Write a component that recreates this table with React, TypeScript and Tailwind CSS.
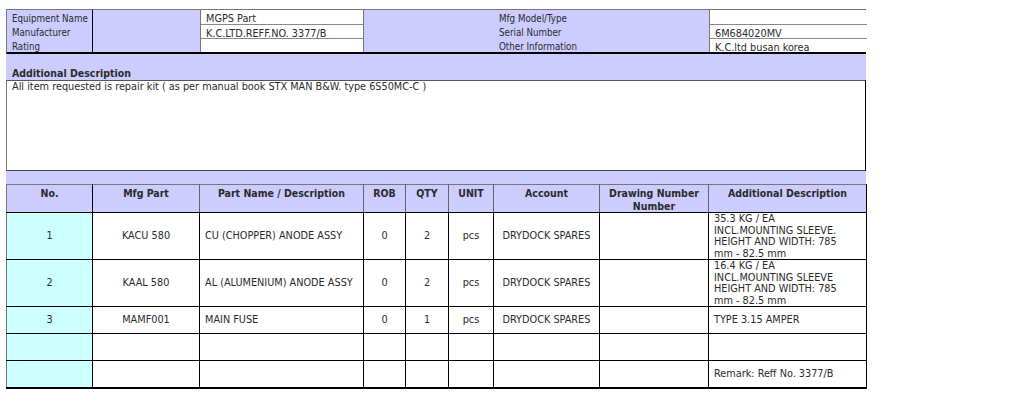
import React from 'react';

const font = "font-['DejaVu_Sans_Condensed','DejaVu_Sans',sans-serif]";

const infoLeft = ['Equipment Name', 'Manufacturer', 'Rating'];
const infoLeftValues = ['MGPS Part', 'K.C.LTD.REFF.NO. 3377/B', ''];
const infoRight = ['Mfg Model/Type', 'Serial Number', 'Other Information'];
const infoRightValues = ['', '6M684020MV', 'K.C.ltd busan korea'];

const rows = [
  {
    no: '1',
    part: 'KACU 580',
    name: 'CU (CHOPPER) ANODE ASSY',
    rob: '0',
    qty: '2',
    unit: 'pcs',
    account: 'DRYDOCK SPARES',
    desc: ['35.3 KG / EA', 'INCL.MOUNTING SLEEVE.', 'HEIGHT AND WIDTH: 785', 'mm - 82.5 mm'],
    h: 'h-[47px]',
  },
  {
    no: '2',
    part: 'KAAL 580',
    name: 'AL (ALUMENIUM) ANODE ASSY',
    rob: '0',
    qty: '2',
    unit: 'pcs',
    account: 'DRYDOCK SPARES',
    desc: ['16.4 KG / EA', 'INCL.MOUNTING SLEEVE', 'HEIGHT AND WIDTH: 785', 'mm - 82.5 mm'],
    h: 'h-[47px]',
  },
  {
    no: '3',
    part: 'MAMF001',
    name: 'MAIN FUSE',
    rob: '0',
    qty: '1',
    unit: 'pcs',
    account: 'DRYDOCK SPARES',
    desc: ['TYPE 3.15 AMPER'],
    h: 'h-[27px]',
  },
  { no: '', part: '', name: '', rob: '', qty: '', unit: '', account: '', desc: [], h: 'h-[27px]' },
  { no: '', part: '', name: '', rob: '', qty: '', unit: '', account: '', desc: ['Remark: Reff No. 3377/B'], h: 'h-[27px]' },
];

function ValueBox({ values }: { values: string[] }) {
  return (
    <div className="bg-white border-l border-[#777] text-[10.8px]">
      {values.map((v, i) => (
        <div
          key={i}
          className={`pl-[5px] h-[14px] pt-[3px] leading-[11px] whitespace-nowrap ${i === 0 ? '' : 'border-t border-[#888]'}`}
        >
          {v}
        </div>
      ))}
    </div>
  );
}

function Labels({ items, className }: { items: string[]; className: string }) {
  return (
    <div className={`h-[42px] pt-[2px] text-[9.7px] leading-[13.8px] ${className}`}>
      {items.map((l) => (
        <div key={l}>{l}</div>
      ))}
    </div>
  );
}

export default function App() {
  const th = 'border-r border-[#666] border-b border-b-black align-top pt-[2px] font-bold text-[10.5px] leading-[12.5px]';
  const td = 'border-r border-[#888] border-b border-black align-middle leading-[11.5px]';

  return (
    <div className={`${font} bg-white min-h-[397px] text-[10.8px] text-[#2b2b2b] pt-[9px] pl-[6px]`}>
      <div className="w-[860px]">
        {/* Equipment info */}
        <div className="grid grid-cols-[86px_107px_164px_345px_158px] border-t border-l border-[#777] border-r border-r-black border-b-2 border-b-black bg-[#ccccff]">
          <Labels items={infoLeft} className="pl-[5px] border-r border-black" />
          <div />
          <div className="border-r border-[#777]">
            <ValueBox values={infoLeftValues} />
          </div>
          <Labels items={infoRight} className="pl-[135px]" />
          <ValueBox values={infoRightValues} />
        </div>

        {/* Additional description */}
        <div className="bg-[#ccccff] h-[26px] pl-[6px] pt-[13px] font-bold text-[10.5px] leading-[12px]">
          Additional Description
        </div>
        <div className="h-[91px] bg-white border border-t-[#555] border-l-[#777] border-r-black border-b-[#444] pl-[5px] leading-[12px]">
          All item requested is repair kit ( as per manual book STX MAN B&amp;W. type 6S50MC-C )
        </div>
        <div className="bg-[#ccccff] h-[13px]" />

        {/* Items */}
        <table className="w-[860px] table-fixed border-collapse border-t border-l border-[#777] border-r border-r-black border-b-2 border-b-black">
          <colgroup>
            <col className="w-[86px]" />
            <col className="w-[107px]" />
            <col className="w-[164px]" />
            <col className="w-[42px]" />
            <col className="w-[43px]" />
            <col className="w-[45px]" />
            <col className="w-[106px]" />
            <col className="w-[109px]" />
            <col className="w-[158px]" />
          </colgroup>
          <thead>
            <tr className="bg-[#ccccff] h-[25px] text-center">
              <th className={`${th} border-r-black`}>No.</th>
              <th className={th}>Mfg Part</th>
              <th className={th}>Part Name / Description</th>
              <th className={th}>ROB</th>
              <th className={th}>QTY</th>
              <th className={th}>UNIT</th>
              <th className={th}>Account</th>
              <th className={th}>
                Drawing Number
                <br />
                Number
              </th>
              <th className={`${th} border-r-black`}>Additional Description</th>
            </tr>
          </thead>
          <tbody>
            {rows.map((r, i) => (
              <tr key={i} className={r.h}>
                <td className={`${td} border-r-black bg-[#ccffff] text-center`}>{r.no}</td>
                <td className={`${td} text-center`}>{r.part}</td>
                <td className={`${td} pl-[5px]`}>{r.name}</td>
                <td className={`${td} text-center`}>{r.rob}</td>
                <td className={`${td} text-center`}>{r.qty}</td>
                <td className={`${td} text-center`}>{r.unit}</td>
                <td className={`${td} text-center`}>{r.account}</td>
                <td className={td}></td>
                <td className={`${td} border-r-black pl-[5px]`}>
                  {r.desc.map((d) => (
                    <div key={d}>{d}</div>
                  ))}
                </td>
              </tr>
            ))}
          </tbody>
        </table>
      </div>
    </div>
  );
}
